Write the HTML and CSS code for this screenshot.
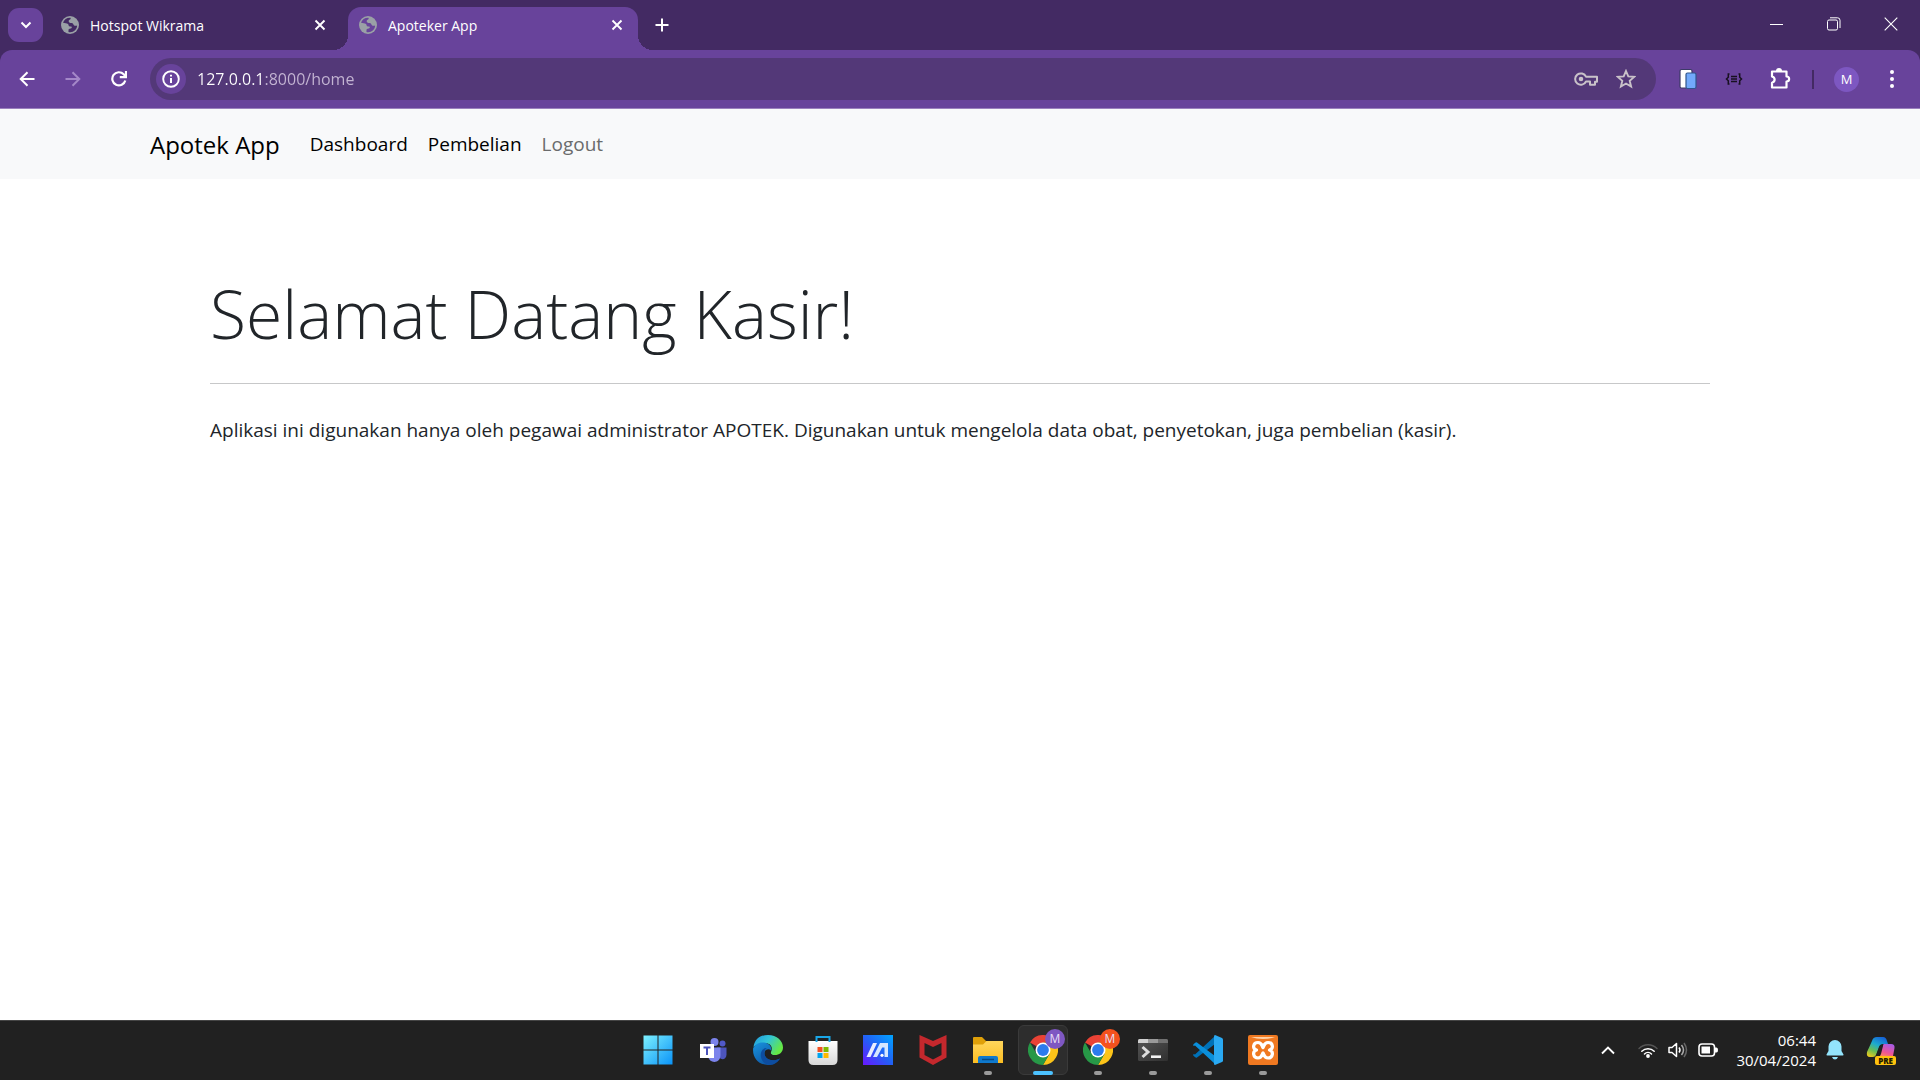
FILE: index.html
```html
<!DOCTYPE html>
<html lang="id">
<head>
<meta charset="utf-8">
<title>Apoteker App</title>
<link rel="stylesheet" href="styles.css">
</head>
<body>
<svg class="defs" aria-hidden="true">
  <defs>
    <symbol id="globe" viewBox="0 0 18 18">
      <circle cx="9" cy="9" r="9" fill="#9aa0a6"/>
      <path d="M9.500 1.700C6 1.500 3 3.500 2 6.700c2 .4 3.700.3 5 1.300 1 .8.300 1.900 1.300 2.300 1.500.6 1.900-.4 2.400.8.5 1.300-.8 1.500-2 1.600-1.500.2-1.200 1.700-1.200 3.300 4.500 1 8.500-2 8.600-6.500-1.400.6-2.600.4-3.400-.6-.9-1.100-.6-1.700-2.100-1.800-1.800 0-3.100-.5-2.900-2 .1-1.200 1.100-1.200 1.700-1.800.5-.5.2-1 .1-1.600z" fill="var(--hole)"/>
    </symbol>
    <symbol id="cross" viewBox="0 0 12 12"><path d="M1.500 1.500l9 9m0-9l-9 9" stroke="#fff" stroke-width="1.900" fill="none"/></symbol>
    <linearGradient id="win" x1="0" y1="0" x2="1" y2="1"><stop offset="0" stop-color="#7df1ff"/><stop offset="1" stop-color="#0a93f8"/></linearGradient>
    <linearGradient id="edgeTop" x1="0" y1="0" x2="1" y2=".5"><stop offset="0" stop-color="#2097df"/><stop offset=".5" stop-color="#32c5d6"/><stop offset="1" stop-color="#65e845"/></linearGradient>
    <linearGradient id="edgeLow" x1="0" y1="0" x2=".8" y2="1"><stop offset="0" stop-color="#1995df"/><stop offset="1" stop-color="#0b4b9c"/></linearGradient>
    <linearGradient id="bag" x1="0" y1="0" x2="0" y2="1"><stop offset="0" stop-color="#fff"/><stop offset="1" stop-color="#d8d8d8"/></linearGradient>
    <linearGradient id="asus" x1="1" y1="0" x2="0" y2="1"><stop offset="0" stop-color="#00a5ff"/><stop offset=".5" stop-color="#2260f5"/><stop offset="1" stop-color="#6a16ff"/></linearGradient>
    <linearGradient id="folder" x1="0" y1="0" x2="0" y2="1"><stop offset="0" stop-color="#ffd65c"/><stop offset="1" stop-color="#fbbd22"/></linearGradient>
    <linearGradient id="term" x1="0" y1="0" x2="1" y2="1"><stop offset="0" stop-color="#555"/><stop offset="1" stop-color="#303030"/></linearGradient>
    <linearGradient id="copA" x1=".7" y1="0" x2=".2" y2="1"><stop offset="0" stop-color="#1664d8"/><stop offset=".4" stop-color="#1cabcf"/><stop offset=".7" stop-color="#67bd55"/><stop offset="1" stop-color="#e8c91d"/></linearGradient>
    <linearGradient id="copB" x1=".7" y1="0" x2=".3" y2="1"><stop offset="0" stop-color="#a85be5"/><stop offset=".6" stop-color="#ef5595"/><stop offset="1" stop-color="#ff954d"/></linearGradient>
    <symbol id="chrome" viewBox="0 0 30 30">
      <path d="M15 15L2 7.500A15 15 0 0 1 28 7.500H15z" fill="#e94235"/>
      <path d="M28 7.500A15 15 0 0 1 15 30l6.500-11.300L15 7.500z" fill="#fcc419"/>
      <path d="M2 7.500A15 15 0 0 0 15 30l6.500-11.300L15 22l-6.500-3.300z" fill="#279847"/>
      <circle cx="15" cy="15" r="7.500" fill="#fff"/><circle cx="15" cy="15" r="5.900" fill="#2d7bed"/>
    </symbol>
  </defs>
</svg>

<div class="desktop">
  <header class="browser">
    <div class="tabstrip">
      <button class="tab-search" aria-label="Cari tab"><svg width="12" height="8" viewBox="0 0 12 8"><path d="M1.500 1.500L6 6l4.500-4.500" fill="none" stroke="#fff" stroke-width="2"/></svg></button>
      <div class="tab">
        <svg class="favicon" width="18" height="18"><use href="#globe"/></svg>
        <span class="tab-title">Hotspot Wikrama</span>
        <button class="tab-close" aria-label="Tutup tab"><svg width="12" height="12"><use href="#cross"/></svg></button>
      </div>
      <div class="tab active">
        <svg class="favicon" width="18" height="18"><use href="#globe"/></svg>
        <span class="tab-title">Apoteker App</span>
        <button class="tab-close" aria-label="Tutup tab"><svg width="12" height="12"><use href="#cross"/></svg></button>
      </div>
      <button class="new-tab" aria-label="Tab baru"><svg width="14" height="14" viewBox="0 0 14 14"><path d="M7 .5v13M.5 7h13" stroke="#fff" stroke-width="2"/></svg></button>
      <div class="window-controls">
        <button aria-label="Minimalkan"><svg width="14" height="14" viewBox="0 0 14 14"><path d="M0 7.500h13" stroke="#fff"/></svg></button>
        <button aria-label="Pulihkan"><svg width="14" height="14" viewBox="0 0 14 14" fill="none" stroke="#fff"><rect x=".5" y="3" width="10" height="10" rx="1.500"/><path d="M3 .8h7.500a2.500 2.500 0 0 1 2.500 2.500V11" /></svg></button>
        <button aria-label="Tutup"><svg width="14" height="14" viewBox="0 0 14 14"><path d="M.7.700l12.600 12.600m0-12.600L.7 13.300" stroke="#fff" stroke-width="1.100"/></svg></button>
      </div>
    </div>
    <div class="toolbar">
      <div class="nav-buttons">
        <button aria-label="Kembali"><svg width="16" height="16" viewBox="0 0 16 16" fill="none" stroke="#fff" stroke-width="2"><path d="M15.500 8H2M8.500 1.200L1.700 8l6.800 6.800"/></svg></button>
        <button aria-label="Maju"><svg width="16" height="16" viewBox="0 0 16 16" fill="none" stroke="#a488c8" stroke-width="2"><path d="M.5 8H14M7.500 1.200L14.300 8l-6.800 6.800"/></svg></button>
        <button aria-label="Muat ulang"><svg width="16" height="16" viewBox="0 0 16 16" fill="none" stroke="#fff" stroke-width="2.200"><path d="M14.300 9.500A6.600 6.600 0 1 1 12.700 3.300L14.500 5.200"/><path d="M15 0v6.200H8.800"/></svg></button>
      </div>
      <div class="omnibox">
        <button class="site-info" aria-label="Info situs"><svg width="18" height="18" viewBox="0 0 18 18"><circle cx="9" cy="9" r="7.800" fill="none" stroke="#fff" stroke-width="1.900"/><path d="M9 8v5M9 4.700v1.900" stroke="#fff" stroke-width="2"/></svg></button>
        <input class="address" type="text" aria-label="Alamat" value="127.0.0.1:8000/home">
        <button class="box-icon" aria-label="Sandi"><svg width="24" height="14" viewBox="0 0 24 14" fill="none" stroke="#c9c2c9" stroke-width="2"><path d="M12 4.700h11v5h-2v3h-5V9.500h-4A5.700 5.700 0 1 1 12 4.700z" stroke-linejoin="round"/><circle cx="7" cy="7" r="1.300" fill="#c9c2c9"/></svg></button>
        <button class="box-icon" aria-label="Bookmark"><svg width="20" height="20" viewBox="0 0 20 20" fill="none" stroke="#c9c2c9" stroke-width="1.900"><path d="M10 2l2.300 5.400 5.900.5-4.500 3.900 1.400 5.800-5.100-3.100-5.100 3.100 1.400-5.800-4.500-3.900 5.900-.5z"/></svg></button>
      </div>
      <div class="extensions">
        <button aria-label="Salin"><svg width="18" height="22" viewBox="0 0 18 22"><rect x="1" y="1.500" width="12" height="18.500" rx="1.500" fill="#fff" stroke="#3d3a68" stroke-width="1.200"/><rect x="7" y="5" width="10" height="15.500" rx="1.500" fill="#72a9fb" stroke="#30568d" stroke-width="1.200"/></svg></button>
        <button aria-label="Format JSON"><svg width="18" height="12" viewBox="0 0 18 12" fill="none" stroke="#17101f" stroke-width="1.500"><path d="M4.500 1H3.300v3.300L1.500 6l1.800 1.700V11h1.200M13.500 1h1.200v3.300L16.500 6l-1.800 1.700V11h-1.200M6 3.500h6M6 6h6M6 8.500h6"/></svg></button>
        <button aria-label="Ekstensi"><svg width="22" height="22" viewBox="0 0 22 22"><path d="M3 3.500h14.500v5c3.500 0 3.500 5 0 5v6H3v-4.800c3.500-1 3.500-5.300 0-6.200z" fill="none" stroke="#fff" stroke-width="2.200" stroke-linejoin="round"/><path d="M7 3a3 3 0 0 1 6 0z" fill="#fff"/></svg></button>
      </div>
      <span class="divider"></span>
      <button class="profile" aria-label="Profil">M</button>
      <button class="menu" aria-label="Menu"><svg width="4" height="18" viewBox="0 0 4 18" fill="#fff"><circle cx="2" cy="2" r="2"/><circle cx="2" cy="9" r="2"/><circle cx="2" cy="16" r="2"/></svg></button>
    </div>
  </header>

  <div class="page">
    <nav class="navbar">
      <div class="container">
        <a class="brand" href="#">Apotek App</a>
        <a class="nav-link" href="#">Dashboard</a>
        <a class="nav-link" href="#">Pembelian</a>
        <a class="nav-link muted" href="#">Logout</a>
      </div>
    </nav>
    <main class="container">
      <section class="welcome">
        <h1>Selamat Datang Kasir!</h1>
        <hr>
        <p>Aplikasi ini digunakan hanya oleh pegawai administrator APOTEK. Digunakan untuk mengelola data obat, penyetokan, juga pembelian (kasir).</p>
      </section>
    </main>
  </div>

  <footer class="taskbar">
    <div class="apps">
      <button class="app" aria-label="Mulai"><svg width="30" height="30" viewBox="0 0 30 30"><path d="M.5.500h14v14H.5zM15.500.500h14v14h-14zM.5 15.500h14v14H.5zM15.500 15.500h14v14h-14z" fill="url(#win)"/></svg></button>
      <button class="app" aria-label="Teams"><svg width="28" height="26" viewBox="0 0 28 26"><circle cx="23.500" cy="6.500" r="3" fill="#5059c9"/><path d="M18 10.500h9.500v7c0 5-5 6-7 3z" fill="#4d55bd"/><circle cx="15.500" cy="5" r="4" fill="#7b83eb"/><path d="M9 10.500h12.500V18c0 9-11.500 9-12.500 1z" fill="#7b83eb"/><rect x="1" y="7" width="14" height="14" fill="#fff"/><path d="M4.500 10.500h7M8 10.500V18" stroke="#4b53bc" stroke-width="2"/></svg></button>
      <button class="app" aria-label="Edge"><svg width="30" height="30" viewBox="0 0 30 30"><path d="M.5 12C2 3 8 0 15 0c9 0 15 6 15 12.500 0 5-4 7.500-8 7.500-3.500 0-5-1.500-4-3 2.500-5-.8-9-6-9C7 8 3 10 .5 12z" fill="url(#edgeTop)"/><path d="M.2 13C3 8 7 7 11 7.500c5 .5 8.500 4.500 7 8.500-5-4-8 1-6 5 2.500 5 9.500 5.500 15 2.500C24 28 20 30 15 30 6 30-1 23 .2 13z" fill="url(#edgeLow)"/><path d="M12 13c-8 4-4 17 5 17 4 0 8-3 10-6.500-8 4-15 .5-15.500-4.500-.2-3 .5-5 2.500-6z" fill="#0d4da0"/><path d="M18 16c-1-2.500-5.500-1.500-5.500 2 0 2.500 1.500 4.500 4 5.500 4 1.500 8 .5 10.500-1l2-3.500q-3 1.500-7 1.500c-3.500 0-5-2-4-4.500z" fill="#212121"/></svg></button>
      <button class="app" aria-label="Store"><svg width="30" height="30" viewBox="0 0 30 30"><path d="M.500 6h29v19q0 5-5 5h-19q-5 0-5-5z" fill="url(#bag)"/><path d="M8.500 7V2h13v5" fill="none" stroke="#1aa7e8" stroke-width="2"/><path d="M9.500 12h5v5h-5z" fill="#f25022"/><path d="M15.500 12h5v5h-5z" fill="#7fba00"/><path d="M9.500 18h5v5h-5z" fill="#00a4ef"/><path d="M15.500 18h5v5h-5z" fill="#ffb900"/></svg></button>
      <button class="app" aria-label="MyASUS"><svg width="30" height="30" viewBox="0 0 30 30"><path d="M0 0h30v30H0z" fill="url(#asus)"/><path d="M3.500 22L10 8h4L7.500 22z" fill="#e9edff"/><path d="M10 22L17 8h8v14h-3.500V12.500h-2.300L14 22z" fill="#d5e6ff"/><circle cx="19" cy="20.300" r="1.600" fill="#fff"/></svg></button>
      <button class="app" aria-label="McAfee"><svg width="28" height="30" viewBox="0 0 28 30"><path d="M.5 0L14 6 27.500 0v22.500L14 30 .5 22.500z" fill="#c4282d"/><path d="M5.500 8L14 12l8.500-4v12L14 24.500 5.500 20z" fill="#212121"/></svg></button>
      <button class="app running" aria-label="File Explorer"><svg width="30" height="28" viewBox="0 0 30 28"><path d="M0 2q0-1 1-1h8l4 4h16v8H0z" fill="#dfa009"/><path d="M0 8.500h10L13.500 5H30v22H0z" fill="url(#folder)"/><path d="M5 27v-5q0-2 2-2h16q2 0 2 2v5z" fill="#0f79cd"/><path d="M9 23.500h12" stroke="#064a85" stroke-width="1.500"/></svg></button>
      <button class="app running current" aria-label="Chrome"><svg width="30" height="30"><use href="#chrome"/></svg><span class="badge">M</span></button>
      <button class="app running" aria-label="Chrome kedua"><svg width="30" height="30"><use href="#chrome"/></svg><span class="badge orange">M</span></button>
      <button class="app running" aria-label="Terminal"><svg width="30" height="22" viewBox="0 0 30 22"><rect width="30" height="22" rx="1.500" fill="url(#term)"/><path d="M0 4V1.500Q0 0 1.500 0H10v4z" fill="#d0d0d0"/><path d="M10 0h10v4H10z" fill="#999"/><path d="M20 0h8.500Q30 0 30 1.500V4H20z" fill="#707070"/><path d="M4.500 8l5.500 5-5.500 5" fill="none" stroke="#ddd" stroke-width="3"/><path d="M13 17.700h10" stroke="#f2f2f2" stroke-width="2.600"/></svg></button>
      <button class="app running" aria-label="VS Code"><svg width="30" height="30" viewBox="0 0 30 30"><path d="M2 19.500L22 1v8L4 22.500q-1 .5-1.800-.3l-1.700-1.500q-.7-1 .2-1.700z" fill="#0072b8"/><path d="M2 10.500L22 29v-8L4 7.500q-1-.5-1.800.3L.5 9.300q-.7 1 .2 1.700z" fill="#0a8fdb"/><path d="M22 0l7 3q1 .5 1 1.500v21q0 1-1 1.500l-7 3q-1 0-1-1.500v-27Q21 0 22 0z" fill="#2aa9f2"/></svg></button>
      <button class="app running" aria-label="XAMPP"><svg width="30" height="30" viewBox="0 0 30 30"><rect width="30" height="30" rx="2" fill="#f07921"/><path d="M3 2h24q-5 2-12 2T3 2z" fill="#ffd2a8"/><path d="M15 12.500c-1-1-.8-5-5-5-5 0-6 6-1.500 7.500-4.500 1.500-3.500 8 1.500 8 4 0 4-4 5-5 1 1 1 5 5 5 5 0 6-6.500 1.500-8 4.500-1.500 3.500-7.500-1.500-7.500-4.200 0-4 4-5 5z" fill="none" stroke="#fff" stroke-width="3.200" stroke-linejoin="round"/></svg></button>
    </div>
    <div class="tray">
      <button class="overflow" aria-label="Ikon tersembunyi"><svg width="14" height="9" viewBox="0 0 14 9"><path d="M1 7.500l6-6 6 6" fill="none" stroke="#fff" stroke-width="1.900"/></svg></button>
      <button class="status" aria-label="Jaringan, suara, baterai">
        <svg width="20" height="15" viewBox="0 0 20 15" fill="none" stroke-linecap="round"><path d="M1 5.500a12.700 12.700 0 0 1 18 0" stroke="#555" stroke-width="1.400"/><path d="M3.800 8.200a8.800 8.800 0 0 1 12.400 0M6.500 11a5 5 0 0 1 7 0" stroke="#fff" stroke-width="1.500"/><circle cx="10" cy="13" r="1.900" fill="#fff"/></svg>
        <svg width="20" height="16" viewBox="0 0 20 16" fill="none" stroke="#fff" stroke-width="1.500" stroke-linejoin="round"><path d="M1 5.500h3L8.500 1.500v13L4 10.500H1zM11 5.500q2 2.500 0 5"/><path d="M13.500 3q4 5 0 10" stroke="#aaa"/><path d="M16 1q5 7 0 14" stroke="#666"/></svg>
        <svg width="20" height="14" viewBox="0 0 20 14"><rect x="1" y="1" width="15.500" height="12" rx="3" fill="none" stroke="#fff" stroke-width="1.600"/><path d="M3.500 3.500H12v7H3.500z" fill="#fff"/><path d="M17 4.500h1.500q1.500 0 1.500 2.500t-1.500 2.500H17z" fill="#fff"/></svg>
      </button>
      <button class="clock"><span>06:44</span><span>30/04/2024</span></button>
      <button class="bell" aria-label="Notifikasi"><svg width="18" height="20" viewBox="0 0 18 20" fill="#93e4fc"><path d="M9 0a6.500 6.500 0 0 1 6.500 6.500v4.500l2 3.500q.3 1-.8 1H1.300q-1.100 0-.8-1l2-3.500V6.500A6.500 6.500 0 0 1 9 0zM6 17h6q-1 2.500-3 2.500T6 17z"/></svg></button>
      <button class="copilot" aria-label="Copilot"><svg width="30" height="26" viewBox="0 0 30 26"><path d="M6 4q1-4 5-4h6q3 0 4 4l1 3h-5q-3 0-4 3l-3 8q-1 2-3 2H4q-4 0-3-5z" fill="url(#copA)"/><path d="M18 7h7q4 0 3.500 4L27 19q-1 2-4 2H12q2-1 3-4l2-8q0-2 1-2z" fill="url(#copB)"/><path d="M13.500 9q1-1.500 3.500-1.500L13 20h-3.500z" fill="#212121"/></svg><span class="pre">PRE</span></button>
    </div>
  </footer>
</div>
</body>
</html>
```
FILE: styles.css
```css
* { box-sizing: border-box; }
body {
  margin: 0;
  font-family: "Open Sans", "Noto Sans", sans-serif;
  color: #212529;
  background: #fff;
}
button {
  display: grid;
  place-items: center;
  flex: none;
  padding: 0;
  border: 0;
  background: none;
  color: inherit;
  font: inherit;
}
a { text-decoration: none; }
svg { display: block; }
.defs { position: absolute; width: 0; height: 0; }

.desktop { display: flex; flex-direction: column; min-height: 100vh; }

/* Browser frame */
.browser { background: #432a63; color: #fff; }
.tabstrip { display: flex; align-items: flex-end; height: 50px; }
.tab-search {
  width: 35px;
  height: 34px;
  margin: 0 5px 8px 8px;
  border-radius: 11px;
  background: #68439b;
}
.tab {
  --hole: #432a63;
  position: relative;
  display: flex;
  align-items: center;
  width: 290px;
  height: 43px;
  padding: 0 15px 7px 11px;
  gap: 11px;
  border-radius: 13px 13px 0 0;
  font-size: 14px;
}
.tab:not(.active) { width: 300px; padding-left: 13px; padding-right: 22px; }
.tab.active { --hole: #68439b; background: #68439b; }
.tab.active::before,
.tab.active::after {
  content: "";
  position: absolute;
  bottom: 0;
  width: 15px;
  height: 15px;
}
.tab.active::before { right: 100%; background: radial-gradient(circle at 0 0, transparent 15px, #68439b 15px); }
.tab.active::after { left: 100%; background: radial-gradient(circle at 100% 0, transparent 15px, #68439b 15px); }
.tab-title { flex: 1; white-space: nowrap; }
.favicon { flex: none; }
.new-tab { width: 30px; height: 30px; margin: 0 0 10px 9px; }
.window-controls { display: flex; align-self: stretch; margin-left: auto; padding-right: 1px; }
.window-controls button { width: 57px; height: 48px; }

.toolbar {
  display: flex;
  align-items: center;
  height: 59px;
  padding: 0 19px 0 12px;
  border-bottom: 1px solid #9b80bd;
  border-radius: 12px 12px 0 0;
  background: #68439b;
}
.nav-buttons { display: flex; gap: 16px; margin-right: 16px; }
.nav-buttons button { width: 30px; height: 30px; }
.omnibox {
  display: flex;
  flex: 1;
  align-items: center;
  height: 42px;
  padding: 0 14px 0 6px;
  border-radius: 21px;
  background: #533878;
}
.site-info { width: 30px; height: 30px; border-radius: 50%; background: #68439b; }
.address {
  flex: 1;
  min-width: 0;
  height: 30px;
  padding: 0 0 0 11px;
  border: 0;
  font: 16px "Open Sans", "Noto Sans", sans-serif;
  color: transparent;
  background: linear-gradient(90deg, #fff 78px, #c4b5d3 78px);
  -webkit-background-clip: text;
  background-clip: text;
}
.box-icon { width: 32px; height: 32px; }
.box-icon + .box-icon { margin-left: 8px; }
.extensions { display: flex; gap: 14px; margin: 0 16px; }
.extensions button { width: 32px; height: 32px; }
.divider { width: 2px; height: 19px; background: #432a63; }
.profile {
  width: 25px;
  height: 25px;
  margin: 0 24px 0 20px;
  border-radius: 50%;
  background: #7d57c1;
  font-size: 13px;
}
.menu { width: 18px; height: 30px; }

/* Web page */
.page { flex: 1; }
.container { width: 100%; max-width: 1650px; margin: 0 auto; padding: 0 15px; }
.navbar { background: #f8f9fa; }
.navbar .container { display: flex; align-items: center; height: 70px; }
.brand { margin-right: 24px; font-size: 25px; color: #000; }
.nav-link { padding: 0 10px; font-size: 19px; color: #000; }
.brand { margin-right: 20px; font-size: 24px; }
.nav-link.muted { color: #6a6b6c; }
.welcome { padding: 88px 60px; }
h1 { margin: 0 0 24px; font-size: 66px; font-weight: 300; line-height: 92px; }
hr { height: 1px; margin: 0; border: 0; background: #c7c8c9; }
.welcome p { margin: 30px 0 0; font-size: 19px; line-height: 32px; }

/* Taskbar */
.taskbar {
  display: grid;
  grid-template-columns: 1fr auto 1fr;
  height: 60px;
  border-top: 1px solid #454545;
  background: #212121;
  color: #fff;
}
.apps { display: flex; grid-column: 2; }
.app { position: relative; width: 55px; height: 58px; }
.app.running::after {
  content: "";
  position: absolute;
  bottom: 4px;
  left: 24px;
  width: 8px;
  height: 4px;
  border-radius: 2px;
  background: #9a9a9a;
}
.app.current::before {
  content: "";
  position: absolute;
  inset: 4px 2px 4px 3px;
  border: 1px solid #3a3a3a;
  border-radius: 6px;
  background: #2d2d2d;
}
.app.current svg { position: relative; }
.app.current.running::after { left: 18px; width: 20px; background: #4cc2ff; }
.badge {
  position: absolute;
  top: 8px;
  left: 30px;
  width: 20px;
  height: 20px;
  border-radius: 50%;
  background: #7e57c2;
  color: #e8def5;
  font-size: 12px;
  line-height: 20px;
  text-align: center;
}
.badge.orange { background: #f4511e; }
.tray { display: flex; align-items: center; justify-content: flex-end; height: 58px; padding-right: 24px; }
.overflow { width: 30px; height: 40px; margin-right: 15px; }
.status { display: flex; align-items: center; gap: 10px; margin-right: 18px; }
.clock { justify-items: end; font-size: 15px; line-height: 20px; }
.bell { width: 18px; height: 40px; margin: 0 22px 0 10px; }
.copilot { position: relative; width: 30px; height: 34px; }
.pre {
  position: absolute;
  right: 0;
  bottom: 2px;
  padding: 0 3px;
  border-radius: 2px;
  background: #ffc20e;
  color: #211a00;
  font-size: 8px;
  font-weight: 800;
  line-height: 9px;
}
```
